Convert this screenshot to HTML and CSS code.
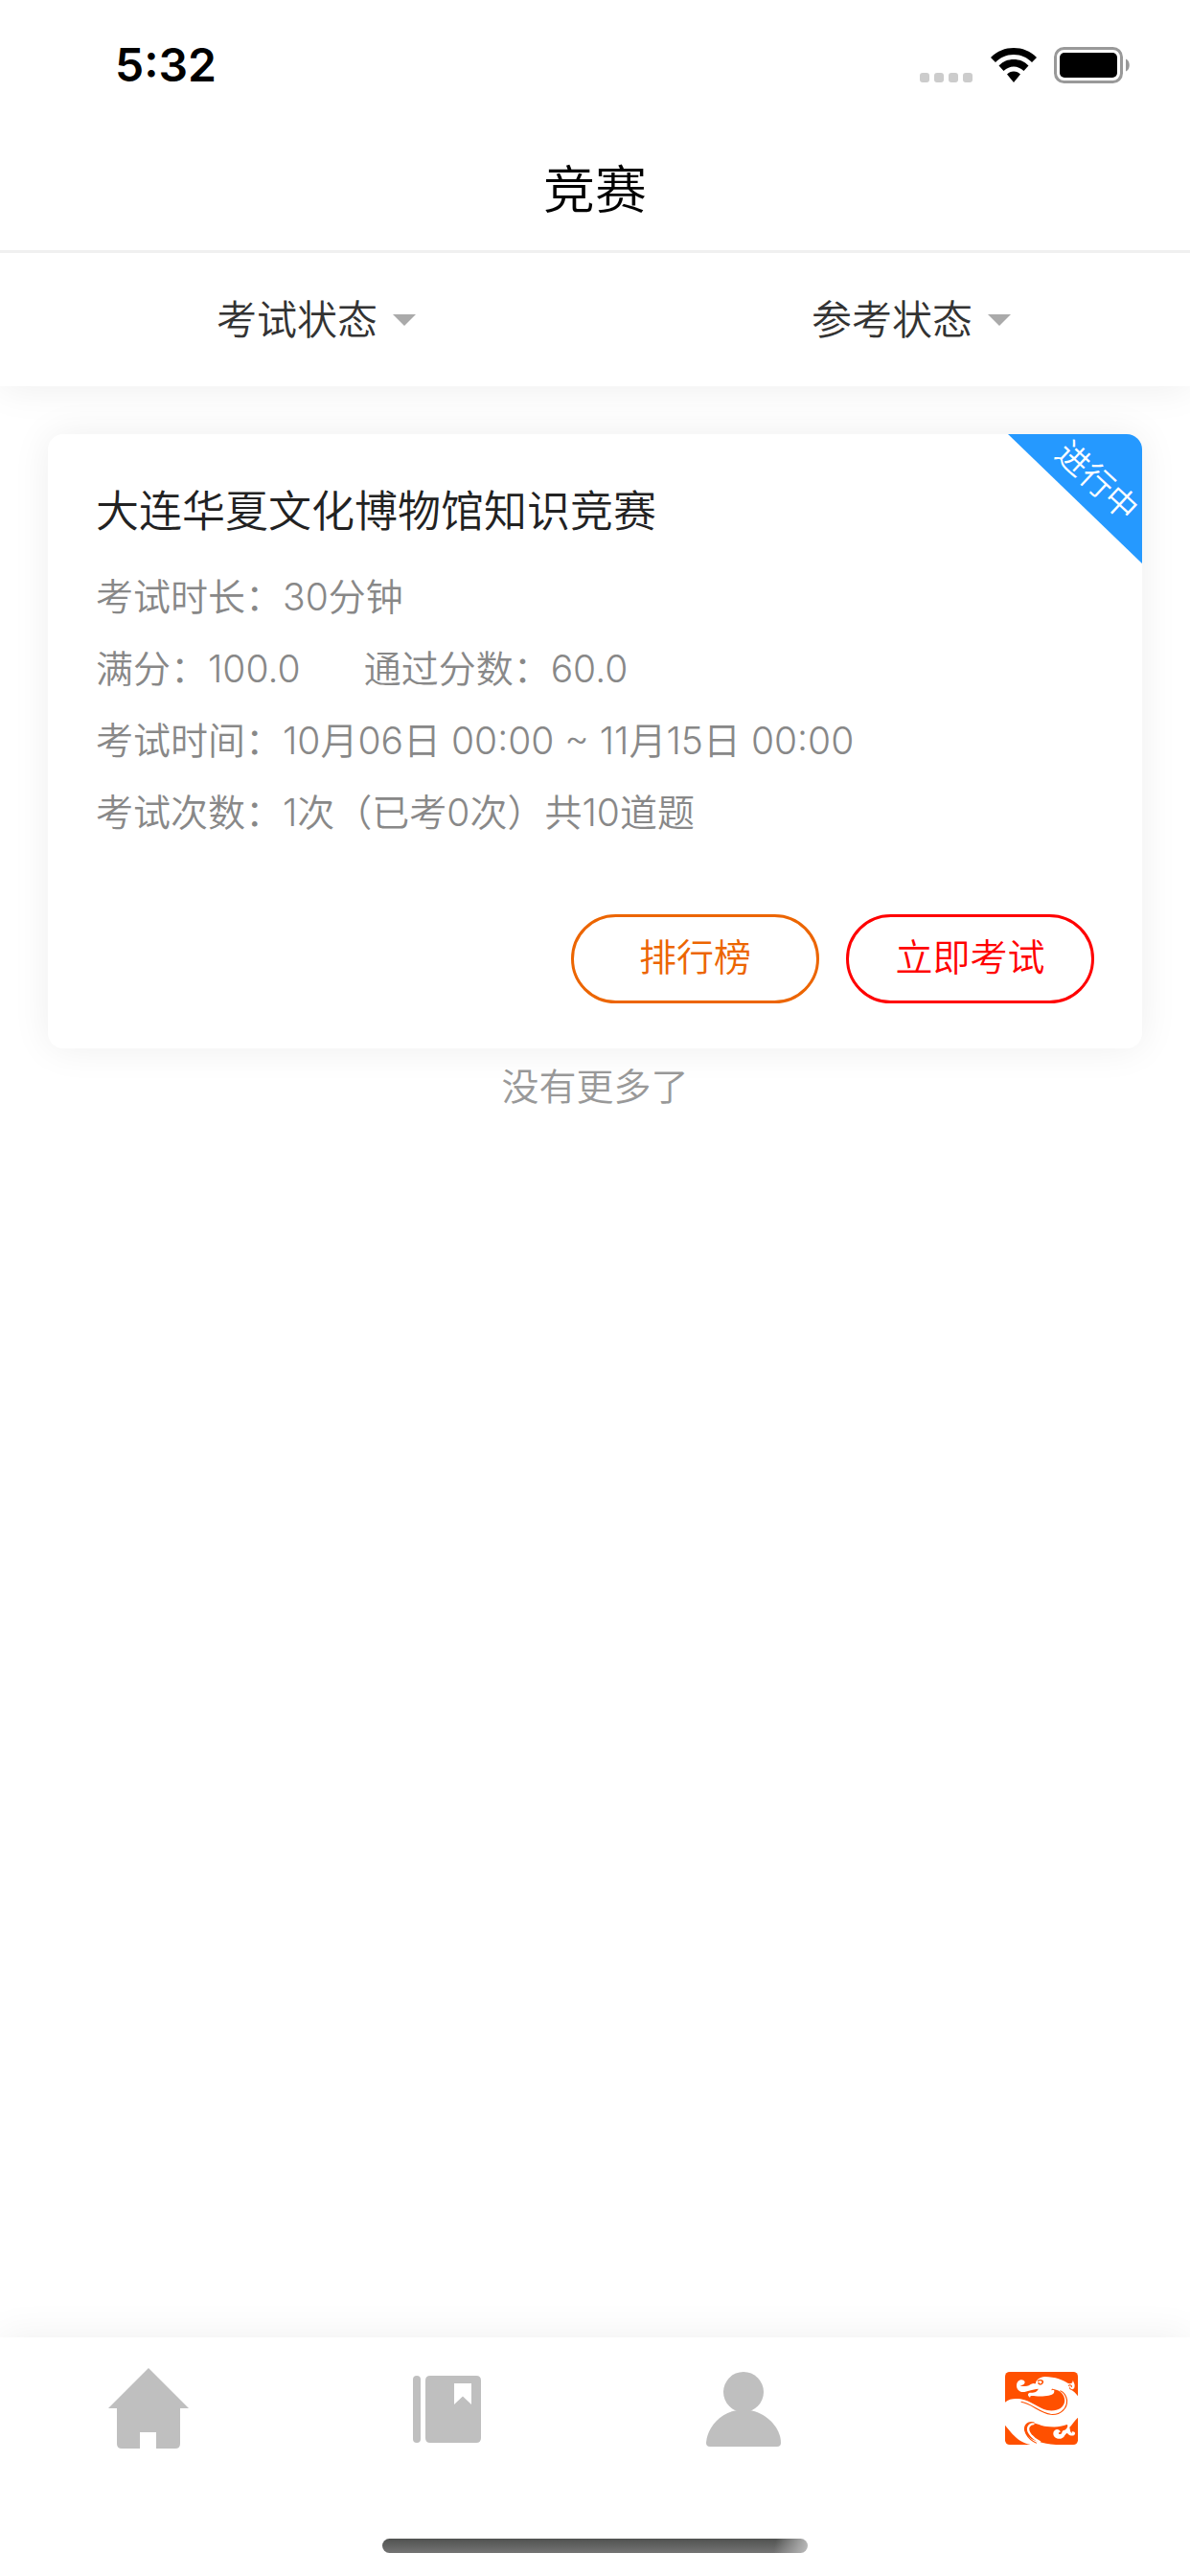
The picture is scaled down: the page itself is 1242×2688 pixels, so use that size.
FILE: index.html
```html
<!DOCTYPE html>
<html lang="zh-CN">
<head>
    <meta charset="UTF-8">
    <meta name="viewport" content="width=device-width, initial-scale=1.0">
    <title>竞赛</title>
    <link rel="stylesheet" href="styles.css">
</head>
<body>
    <div class="status-bar">
        <span class="time">5:32</span>
        <div class="status-icons">
            <svg width="56" height="38" viewBox="0 0 56 38" fill="#ccc">
                <rect x="0" y="27" width="10" height="10" rx="3"/>
                <rect x="15" y="27" width="10" height="10" rx="3"/>
                <rect x="30" y="27" width="10" height="10" rx="3"/>
                <rect x="45" y="27" width="10" height="10" rx="3"/>
            </svg>
            <svg width="48" height="38" viewBox="0 0 48 38">
                <path d="M24 1 C33 1 41 4 48 11 L43 16 C38 11 32 8 24 8 C16 8 10 11 5 16 L0 11 C7 4 15 1 24 1Z"/>
                <path d="M24 13 C30 13 35 15 39.500 19.500 L34.500 25 C31 22 28 20.500 24 20.500 C20 20.500 17 22 13.500 25 L8.500 19.500 C13 15 18 13 24 13Z"/>
                <path d="M24 25.500 C27 25.500 29 26.500 31 28.500 L24 37 L17 28.500 C19 26.500 21 25.500 24 25.500Z"/>
            </svg>
            <svg width="80" height="38" viewBox="0 0 80 38">
                <rect x="1.500" y="1.500" width="69" height="35" rx="9" fill="none" stroke="#999" stroke-width="3"/>
                <rect x="6" y="6" width="60" height="26" rx="5"/>
                <path d="M75 12.500 C80 14 80 24 75 25.500Z" fill="#999"/>
            </svg>
        </div>
    </div>

    <header class="header">
        <h1>竞赛</h1>
    </header>

    <div class="filters">
        <div class="filter">
            <div class="filter-box">
                <select aria-label="考试状态">
                    <option>考试状态</option>
                </select>
            </div>
        </div>
        <div class="filter">
            <div class="filter-box">
                <select aria-label="参考状态">
                    <option>参考状态</option>
                </select>
            </div>
        </div>
    </div>

    <main class="content">
        <section class="card">
            <div class="ribbon"><span>进行中</span></div>
            <h2>大连华夏文化博物馆知识竞赛</h2>
            <p>考试时长：30分钟</p>
            <p class="scores"><span>满分：100.0</span><span>通过分数：60.0</span></p>
            <p>考试时间：10月06日 00:00 ~ 11月15日 00:00</p>
            <p>考试次数：1次（已考0次）共10道题</p>
            <div class="actions">
                <button type="button" class="btn btn-rank">排行榜</button>
                <button type="button" class="btn btn-start">立即考试</button>
            </div>
        </section>
        <div class="no-more">没有更多了</div>
    </main>

    <footer class="footer">
        <nav class="tabs">
            <a href="#" aria-label="首页">
                <svg width="84" height="84" viewBox="0 0 84 84" fill="#bfbfbf">
                    <path d="M42 0 L84 42 H75 V79 Q75 84 70 84 H50 V67 H33 V84 H14 Q9 84 9 79 V42 H0Z"/>
                </svg>
            </a>
            <a href="#" aria-label="学习">
                <svg width="72" height="84" viewBox="0 0 72 84" fill="#bfbfbf">
                    <rect x="1" y="8" width="8" height="70" rx="4"/>
                    <path d="M19 8 H67 Q72 8 72 13 V73 Q72 78 67 78 H19 Q14 78 14 73 V13 Q14 8 19 8Z M44 16 V38 L53 29.500 L62 38 V16Z" fill-rule="evenodd"/>
                </svg>
            </a>
            <a href="#" aria-label="我的">
                <svg width="78" height="84" viewBox="0 0 78 84" fill="#bfbfbf">
                    <circle cx="39" cy="25" r="21"/>
                    <path d="M33 44 H45 C64 47 78 63 78 78 Q78 82 74 82 H4 Q0 82 0 78 C1 62 15 46 33 44Z"/>
                </svg>
            </a>
            <a href="#" aria-label="竞赛">
                <svg width="76" height="76" viewBox="1081 198 192 228" preserveAspectRatio="none">
                    <rect x="1081" y="198" width="192" height="228" rx="12" ry="14" fill="#ff5000"/>
                    <g fill="#fff">
                        <path d="M1081 293 C1092 282 1106 280 1122 283 C1150 288 1168 312 1192 318 C1216 323 1236 312 1238 290 C1239 272 1229 256 1209 252 L1165 240 C1156 232 1168 214 1186 213 C1212 213 1236 224 1250 236 L1251 252 C1262 258 1268 265 1273 274 V341 C1264 351 1259 362 1252 370 L1244 363 C1225 372 1208 371 1185 368 C1169 365 1158 354 1143 358 C1129 364 1130 384 1140 398 C1152 413 1178 422 1215 426 H1148 C1112 418 1097 386 1081 365Z"/>
                        <path d="M1120 239 C1128 242 1134 236 1133 229 C1130 221 1120 221 1115 228 C1108 238 1111 255 1122 260 C1136 264 1149 252 1169 251 C1164 262 1157 263 1146 263 C1139 266 1141 274 1147 278 C1147 271 1154 273 1161 274 C1180 276 1203 274 1210 264 C1213 256 1209 252 1203 256 C1211 241 1196 228 1173 228 C1166 230 1164 237 1156 234 C1149 234 1146 242 1139 242 C1131 242 1127 246 1120 239Z"/>
                        <path d="M1246 233 C1256 238 1259 232 1260 224 C1262 233 1266 235 1264 246 C1263 253 1257 255 1253 249Z"/>
                        <path d="M1246 360 C1247 371 1244 379 1234 382 C1229 386 1233 392 1226 393 C1220 392 1221 387 1227 386 C1224 373 1208 377 1208 391 C1208 402 1217 409 1228 407 C1239 404 1237 393 1245 389 C1248 396 1258 401 1264 395 C1268 389 1264 383 1257 385 L1258 389 C1252 388 1253 379 1251 372 L1261 354Z"/>
                    </g>
                    <g fill="none" stroke="#ff5000" stroke-width="3">
                        <path d="M1123 292 C1151 297 1172 326 1201 331 C1229 334 1245 311 1244 287 C1242 271 1235 261 1226 257"/>
                        <path d="M1167 227 C1174 221 1182 225 1180 232 C1177 240 1167 237 1170 231" stroke-width="4"/>
                        <path d="M1248 242 C1252 237 1258 240 1256 246"/>
                    </g>
                    <path d="M1212 258 C1225 262 1234 281 1231 299 C1228 315 1206 319 1190 313 C1168 304 1158 289 1137 285 L1180 280 C1198 280 1210 272 1212 258Z" fill="#ff5000"/>
                    <path d="M1158 360 C1143 361 1138 375 1145 389 C1152 403 1162 411 1174 418" fill="none" stroke="#fff" stroke-width="6"/>
                    <path d="M1158 357 C1140 352 1131 365 1133 380 C1137 400 1149 413 1164 421" fill="none" stroke="#ff5000" stroke-width="3"/>
                </svg>
            </a>
        </nav>
        <div class="home-indicator"></div>
    </footer>
</body>
</html>
```
FILE: styles.css
```css
* {
    margin: 0;
    padding: 0;
    box-sizing: border-box;
}

body {
    min-height: 100vh;
    display: flex;
    flex-direction: column;
    background-color: #fff;
    color: #888;
    font-family: Inter, "Noto Sans CJK SC", sans-serif;
    font-size: 39px;
    font-weight: 350;
}

svg {
    display: block;
}

.status-bar {
    height: 132px;
    padding: 3px 62px 0 120px;
    display: flex;
    align-items: center;
    justify-content: space-between;
    color: #000;
}

.time {
    font-size: 48px;
    font-weight: 600;
}

.status-icons {
    display: flex;
    gap: 18px;
}

.header {
    height: 132px;
    padding-bottom: 4px;
    display: flex;
    align-items: center;
    justify-content: center;
    border-bottom: 3px solid #f0f0f0;
}

.header h1 {
    color: #000;
    font-size: 54px;
    font-weight: inherit;
}

.filters {
    height: 139px;
    display: flex;
    background-color: #fff;
    box-shadow: 0 0 40px rgba(0, 0, 0, 0.08);
    clip-path: inset(0 0 -50px 0);
}

.filter {
    flex: 1;
    display: flex;
    align-items: center;
    justify-content: center;
}

.filter-box {
    position: relative;
}

.filter-box select {
    appearance: none;
    display: block;
    border: none;
    background: none;
    color: #333;
    font-family: inherit;
    font-size: 42px;
    font-weight: inherit;
}

.filter-box::after {
    content: "";
    position: absolute;
    left: 100%;
    top: 50%;
    margin: -6px 0 0 15px;
    border: 12px solid transparent;
    border-top-color: #aaa;
    border-bottom: none;
}

.content {
    flex: 1;
    padding: 50px;
}

.card {
    position: relative;
    padding: 30px 50px 47px;
    border-radius: 16px;
    background-color: #fff;
    box-shadow: 0 0 40px rgba(0, 0, 0, 0.07);
}

.card h2 {
    color: #222;
    font-size: 45px;
    font-weight: inherit;
    line-height: 102px;
}

.card p {
    line-height: 75px;
}

.scores {
    display: flex;
    gap: 66px;
}

.ribbon {
    position: absolute;
    top: 0;
    right: 0;
    width: 140px;
    height: 135px;
    border-top-right-radius: 16px;
    background-color: #2599ff;
    clip-path: polygon(0 0, 100% 0, 100% 100%);
}

.ribbon span {
    position: absolute;
    left: 42px;
    top: 24px;
    color: #fff;
    font-size: 34px;
    line-height: 50px;
    white-space: nowrap;
    transform: rotate(43deg);
}

.actions {
    margin-top: 69px;
    display: flex;
    justify-content: flex-end;
    gap: 28px;
}

.btn {
    width: 259px;
    height: 93px;
    padding-bottom: 10px;
    border: 3px solid;
    border-radius: 47px;
    background-color: #fff;
    font-family: inherit;
    font-size: 39px;
    font-weight: inherit;
}

.btn-rank {
    color: #ec6500;
}

.btn-start {
    color: #f00;
}

.no-more {
    color: #999;
    text-align: center;
    line-height: 80px;
}

.footer {
    padding-bottom: 24px;
    background-color: #fff;
    box-shadow: 0 0 40px rgba(0, 0, 0, 0.07);
}

.tabs {
    height: 210px;
    padding-top: 32px;
    display: flex;
}

.tabs a {
    flex: 1;
    height: 84px;
    display: flex;
    align-items: center;
    justify-content: center;
}

.home-indicator {
    width: 444px;
    height: 15px;
    margin: 0 auto;
    border-radius: 8px;
    background: linear-gradient(100deg, transparent 92%, #bbb), linear-gradient(#505250, #747474);
}
```
